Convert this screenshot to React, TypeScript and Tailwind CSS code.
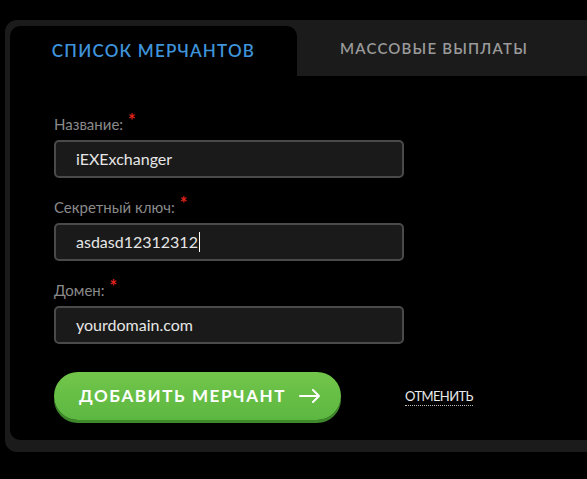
import React from "react";

const caps = { fontFamily: "Lato, 'Open Sans', sans-serif" };
const body = { fontFamily: "Lato, 'Open Sans', sans-serif" };

function Field({ label, value, caret }: { label: string; value: string; caret?: boolean }) {
  return (
    <div className="flex flex-col">
      <div className="flex items-start h-[20px] text-[15px] leading-[20px] text-[#8a8a8a]" style={body}>
        <span>{label}</span>
        <span className="ml-[5px] -mt-[3px] text-[#e0231a] text-[18px] leading-[18px] font-bold">*</span>
      </div>
      <div className="mt-[6px] w-[350px] h-[38px] rounded-[5px] border-2 border-[#4a4a4a] bg-[#1a1a1a] flex items-center pl-[20px] text-[16px] text-[#e6e6e6]" style={body}>
        <span>{value}</span>
        {caret && <span className="ml-[1px] w-[1px] h-[20px] bg-white" />}
      </div>
    </div>
  );
}

export default function App() {
  return (
    <div className="w-[587px] h-[479px] bg-black overflow-hidden pt-[20px] pl-[5px]">
      <div className="w-[640px] h-[432px] bg-[#1b1b1b] rounded-l-[12px] pl-[5px] pb-[12px] flex flex-col">
        <div className="flex h-[56px] shrink-0">
          <div className="mt-[6px] w-[287px] bg-black rounded-t-[10px] flex items-center justify-center">
            <span className="text-[17px] font-semibold tracking-[1.2px] text-[#3f93db]" style={caps}>
              СПИСОК МЕРЧАНТОВ
            </span>
          </div>
          <div className="w-[274px] flex items-center justify-center">
            <span className="text-[15px] font-semibold tracking-[1.2px] text-[#9a9a9a]" style={caps}>
              МАССОВЫЕ ВЫПЛАТЫ
            </span>
          </div>
        </div>
        <div className="flex-1 bg-black rounded-bl-[10px] pl-[44px] pt-[38px]">
          <div className="flex flex-col gap-[19px]">
            <Field label="Название:" value="iEXExchanger" />
            <Field label="Секретный ключ:" value="asdasd12312312" caret />
            <Field label="Домен:" value="yourdomain.com" />
          </div>
          <div className="flex items-center mt-[28px]">
            <button className="h-[48px] w-[287px] rounded-full bg-gradient-to-b from-[#72c64a] to-[#5cb741] shadow-[0_3px_0_#3e8a2a] flex items-center pl-[25px] text-white">
              <span className="text-[17px] font-bold tracking-[1.6px]" style={caps}>
                ДОБАВИТЬ МЕРЧАНТ
              </span>
              <svg className="ml-[13px]" width="22" height="14" viewBox="0 0 22 14" fill="none" stroke="white" strokeWidth="2" strokeLinecap="round" strokeLinejoin="round">
                <path d="M1 7h19M14 1l6 6-6 6" />
              </svg>
            </button>
            <span
              className="ml-[64px] text-[13px] text-[#eaeaea] border-b border-dotted border-[#bbbbbb] leading-[18px] tracking-[-0.6px]"
              style={caps}
            >
              ОТМЕНИТЬ
            </span>
          </div>
        </div>
      </div>
    </div>
  );
}
